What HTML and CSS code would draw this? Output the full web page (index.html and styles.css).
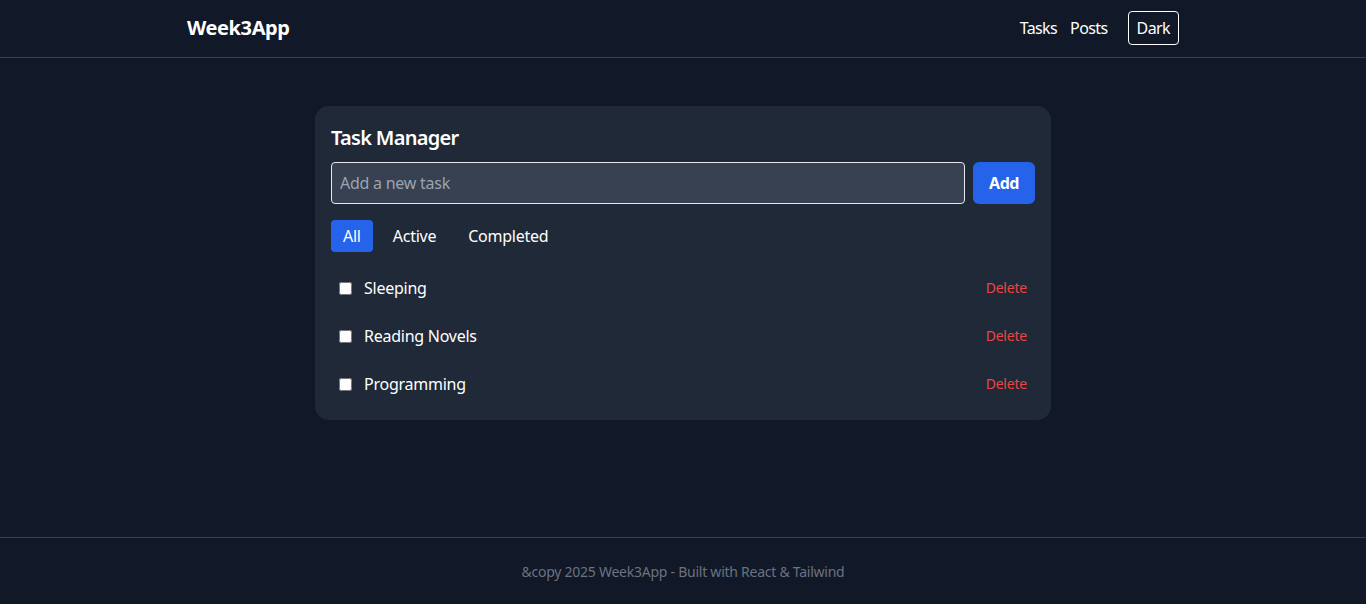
FILE: index.html
```html
<!DOCTYPE html>
<html lang="en">
<head>
<meta charset="utf-8">
<title>Week3App</title>
<link rel="stylesheet" href="styles.css">
</head>
<body>
<div class="page">
  <header class="header">
    <div class="container header-inner">
      <div class="logo">Week3App</div>
      <nav class="nav">
        <a class="nav-link">Tasks</a>
        <a class="nav-link">Posts</a>
        <button class="theme-btn">Dark</button>
      </nav>
    </div>
  </header>
  <main class="main">
    <div class="main-inner">
      <section class="card">
        <h2 class="card-title">Task Manager</h2>
        <div class="add-row">
          <input class="task-input" type="text" placeholder="Add a new task">
          <button class="add-btn">Add</button>
        </div>
        <div class="filters">
          <button class="filter active">All</button>
          <button class="filter">Active</button>
          <button class="filter">Completed</button>
        </div>
        <ul class="list">
          <li class="item"><label class="item-left"><input type="checkbox" class="check"><span>Sleeping</span></label><button class="delete">Delete</button></li>
          <li class="item"><label class="item-left"><input type="checkbox" class="check"><span>Reading Novels</span></label><button class="delete">Delete</button></li>
          <li class="item"><label class="item-left"><input type="checkbox" class="check"><span>Programming</span></label><button class="delete">Delete</button></li>
        </ul>
      </section>
    </div>
  </main>
  <footer class="footer">&amp;copy 2025 Week3App - Built with React &amp; Tailwind</footer>
</div>
</body>
</html>
```
FILE: styles.css
```css
* { box-sizing: border-box; }
html, body { margin: 0; padding: 0; }
body {
  background: #111827;
  color: #ffffff;
  font-family: "Noto Sans", "Open Sans", sans-serif;
  font-size: 16px;
  line-height: 24px;
  letter-spacing: -0.25px;
}
button, input { font-family: inherit; font-size: inherit; line-height: inherit; letter-spacing: inherit; margin: 0; color: inherit; }
.page { min-height: 604px; display: flex; flex-direction: column; }
.header { border-bottom: 1px solid #374151; }
.container { max-width: 1024px; margin: 0 auto; padding: 0 16px; }
.header-inner { display: flex; align-items: center; justify-content: space-between; padding-top: 11px; padding-bottom: 12px; }
.logo { font-size: 20px; line-height: 28px; font-weight: 700; letter-spacing: -0.4px; }
.nav { display: flex; align-items: center; letter-spacing: -0.6px; }
.nav-link { color: #fff; margin-right: 13px; cursor: pointer; }
.nav-link + .nav-link { margin-right: 20px; }
.theme-btn { background: transparent; border: 1px solid #fff; border-radius: 4px; padding: 4px 8px; cursor: pointer; }
.main { flex: 1; }
.main-inner { max-width: 768px; margin: 0 auto; padding: 48px 16px; }
.card { background: #1f2937; border-radius: 14px; padding: 16px; }
.card-title { margin: 0 0 12px; font-size: 20px; line-height: 28px; font-weight: 600; letter-spacing: -0.7px; padding-top: 2px; margin-bottom: 10px; }
.add-row { display: flex; gap: 8px; margin-bottom: 16px; }
.task-input { flex: 1; background: #374151; border: 1px solid #e5e7eb; border-radius: 4px; padding: 8px; color: #fff; outline: none; }
.task-input::placeholder { color: #9ca3af; }
.add-btn { background: #2563eb; border: 0; border-radius: 6px; padding: 8px 16px; font-weight: 700; width: 62px; letter-spacing: -0.5px; }
.filters { display: flex; gap: 8px; margin-bottom: 16px; }
.filter { background: transparent; border: 0; border-radius: 4px; padding: 4px 12px; }
.filter.active { background: #2563eb; }
.list { list-style: none; margin: 0; padding: 0; display: flex; flex-direction: column; gap: 8px; }
.item { display: flex; align-items: center; justify-content: space-between; padding: 8px; border-radius: 4px; }
.item-left { display: flex; align-items: center; gap: 12px; }
.check { width: 13px; height: 13px; margin: 0; }
.delete { background: transparent; border: 0; padding: 0; color: #ef4444; font-size: 14px; line-height: 20px; letter-spacing: -0.2px; }
.footer { border-top: 1px solid #374151; text-align: center; color: #6b7280; font-size: 14px; line-height: 20px; letter-spacing: -0.25px; padding: 24px 0 22px; }
```
